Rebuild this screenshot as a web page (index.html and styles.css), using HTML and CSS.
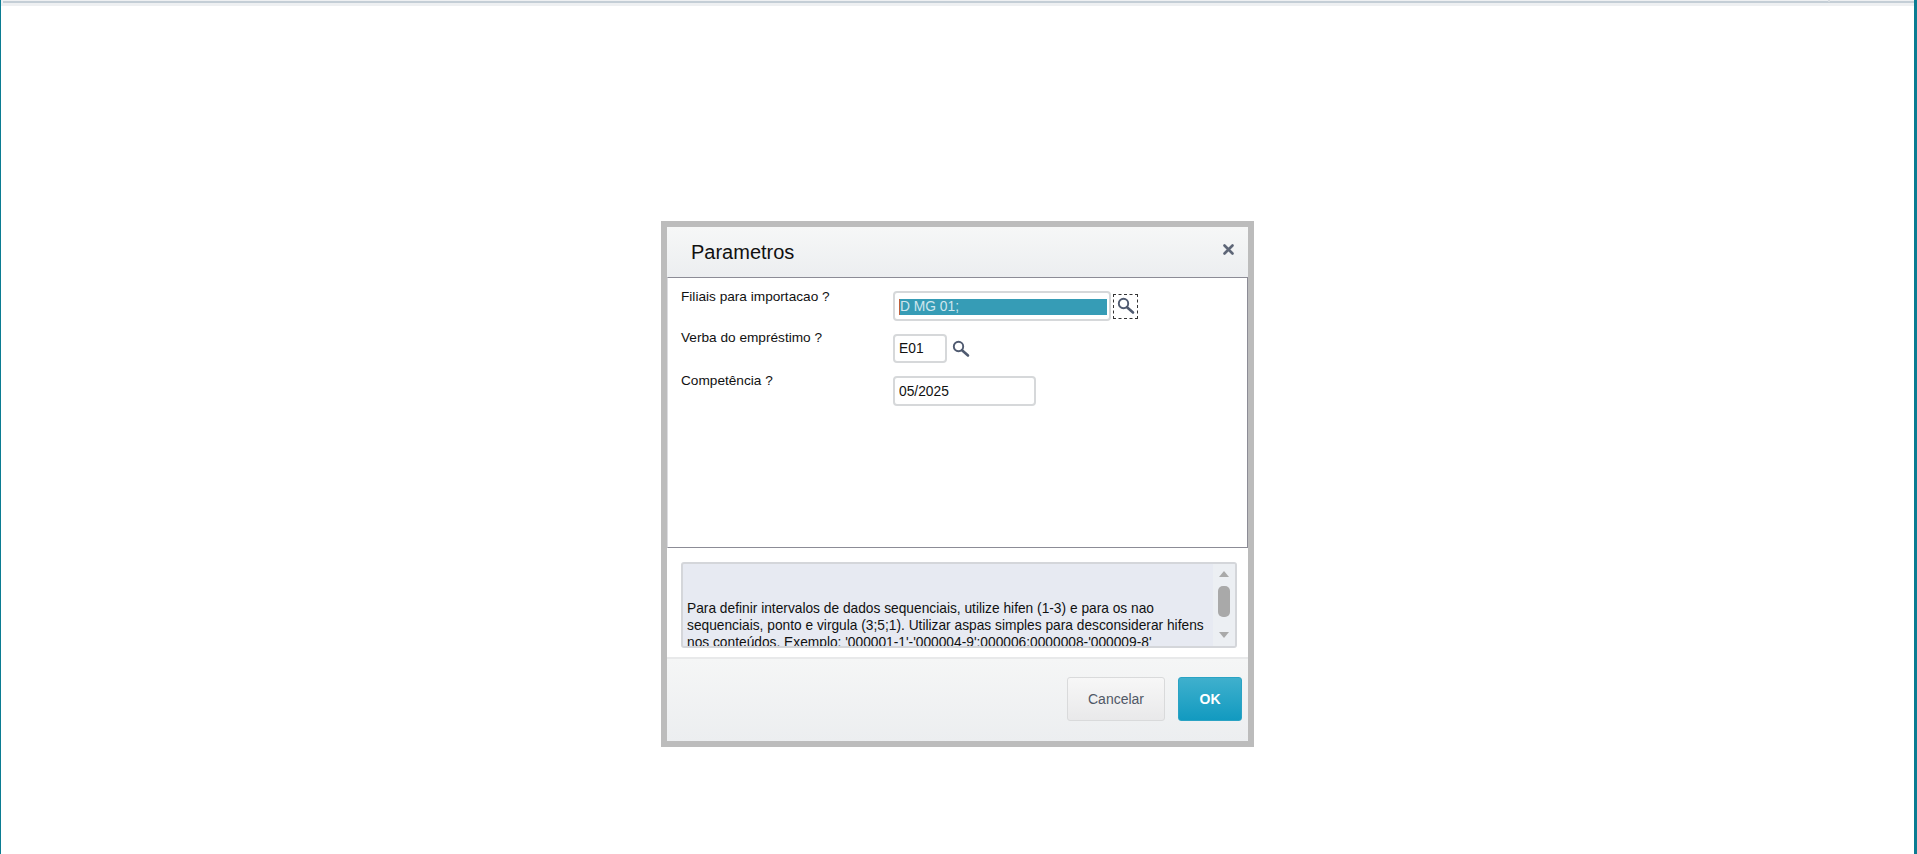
FILE: index.html

```html
<!DOCTYPE html>
<html lang="pt-BR">
<head>
  <meta charset="UTF-8" />
  <title>Parametros</title>
  <link rel="stylesheet" href="styles.css">
</head>
<body>
  <div class="topbar"><span class="topbar-line"></span><span class="topbar-tick"></span></div>

  <main class="page">
    <section class="dialog">
      <header class="dialog-head">
        <h1>Parametros</h1>
        <svg class="close" width="11" height="11" viewBox="0 0 11 11"><path d="M1.5 1.5l8 8M9.5 1.5l-8 8" stroke="#5e6677" stroke-width="2.6" stroke-linecap="round"/></svg>
      </header>

      <div class="dialog-body">
        <div class="row row-1">
          <label class="label">Filiais para importacao ?</label>
          <div class="field field-wide"><span class="selected">D MG 01;</span></div>
          <button class="lookup lookup-focus" type="button">
            <svg width="20" height="20" viewBox="0 0 20 20"><circle cx="7.5" cy="6.5" r="4.7" fill="none" stroke="#4f5a70" stroke-width="1.9"/><path d="M11 10.2l6 5.3" stroke="#4f5a70" stroke-width="2.6" stroke-linecap="round"/></svg>
          </button>
        </div>
        <div class="row row-2">
          <label class="label">Verba do empréstimo ?</label>
          <input class="field field-short" type="text" value="E01">
          <button class="lookup" type="button">
            <svg width="20" height="20" viewBox="0 0 20 20"><circle cx="7.5" cy="7.5" r="4.7" fill="none" stroke="#4f5a70" stroke-width="1.9"/><path d="M11 11.2l6 5.3" stroke="#4f5a70" stroke-width="2.6" stroke-linecap="round"/></svg>
          </button>
        </div>
        <div class="row row-3">
          <label class="label">Competência ?</label>
          <input class="field field-date" type="text" value="05/2025">
        </div>
      </div>

      <div class="help-wrap">
        <div class="help">
          <div class="help-text">
            <p>Para definir intervalos de dados sequenciais, utilize hifen (1-3) e para os nao sequenciais, ponto e virgula (3;5;1). Utilizar aspas simples para desconsiderar hifens nos conteúdos. Exemplo: '000001-1'-'000004-9':000006:0000008-'000009-8'</p>
          </div>
          <div class="scrollbar">
            <span class="arrow-up"></span>
            <span class="thumb"></span>
            <span class="arrow-down"></span>
          </div>
        </div>
      </div>

      <footer class="dialog-foot">
        <button class="btn btn-cancel" type="button">Cancelar</button>
        <button class="btn btn-ok" type="button">OK</button>
      </footer>
    </section>
  </main>
</body>
</html>
```

FILE: styles.css

```css
html, body {
  margin: 0;
  padding: 0;
  height: 100%;
  overflow: hidden;
}
body {
  font-family: "Liberation Sans", Arial, sans-serif;
  background: #fff;
  color: #111;
  border-left: 1px solid #0b7c92;
  border-right: 3px solid #0b7c92;
  box-sizing: border-box;
}
.topbar {
  height: 6px;
  background: #eef0f2;
  padding-top: 1px;
  box-sizing: border-box;
  position: relative;
}
.topbar-line {
  display: block;
  height: 2px;
  margin-left: 2px;
  background: #c4ced6;
}
.topbar-tick {
  position: absolute;
  top: 0;
  right: 84px;
  width: 2px;
  height: 2px;
  background: #d8dde1;
}
.page {
  display: flex;
  justify-content: center;
  padding-top: 215px;
}
.dialog {
  width: 581px;
  height: 514px;
  border: 6px solid #bcbcbc;
  display: flex;
  flex-direction: column;
  background: #fff;
}
.dialog-head {
  height: 50px;
  flex: none;
  display: flex;
  align-items: center;
  justify-content: space-between;
  padding: 0 14px 6px 25px;
  box-sizing: border-box;
  background: linear-gradient(#f6f7f7, #eceef0);
}
.dialog-head h1 {
  margin: 0;
  font-size: 20px;
  font-weight: normal;
  color: #111;
  position: relative;
  top: 3px;
  left: -1px;
}
.dialog-body {
  height: 271px;
  flex: none;
  box-sizing: border-box;
  border: 1px solid #8c8c96;
  border-left-color: #dcdce0;
  padding: 13px 0 0 13px;
}
.row {
  display: flex;
  align-items: flex-start;
  margin-bottom: 13px;
}
.label {
  width: 212px;
  flex: none;
  font-size: 13.65px;
  line-height: 16px;
  margin-top: -2px;
  color: #111;
}
.row-2 .label {
  margin-top: -4px;
}
.row-3 .label {
  margin-top: -3px;
}
.field {
  box-sizing: border-box;
  height: 30px;
  border: 2px solid #d6d8da;
  border-radius: 4px;
  background: #fff;
  font-family: inherit;
  font-size: 13.8px;
  color: #111;
  padding: 0 4px;
  margin: 0;
  outline: none;
}
.field-wide {
  width: 218px;
  padding: 6px 0 0 4px;
}
.field-short {
  width: 54px;
  height: 29px;
}
.field-date {
  width: 143px;
}
.selected {
  display: block;
  width: 208px;
  height: 16px;
  line-height: 16px;
  background: #369cb6;
  color: #cfe6ed;
  border-left: 1px solid #c0603c;
  box-sizing: border-box;
}
.lookup {
  width: 25px;
  height: 25px;
  padding: 0;
  margin: 3px 0 0 2px;
  background: none;
  border: 1px solid transparent;
  box-sizing: border-box;
  display: flex;
  align-items: center;
  justify-content: center;
}
.lookup-focus {
  border: 1px dashed #333;
}
.row-2 .lookup {
  margin: 2px 0 0 1px;
}
.help-wrap {
  height: 109px;
  flex: none;
  padding: 14px 11px 0 14px;
  box-sizing: border-box;
}
.help {
  height: 86px;
  box-sizing: border-box;
  border: 2px solid #d4d6da;
  border-radius: 3px;
  display: flex;
  overflow: hidden;
  background: #e7eaf2;
}
.help-text {
  flex: 1;
  padding: 36px 0 0 4px;
  font-size: 13.75px;
  line-height: 17px;
  color: #111;
  overflow: hidden;
}
.help-text p {
  margin: 0;
}
.scrollbar {
  width: 22px;
  flex: none;
  background: #eceff3;
  display: flex;
  flex-direction: column;
  align-items: center;
  padding-top: 7px;
  box-sizing: border-box;
}
.arrow-up, .arrow-down {
  width: 0;
  height: 0;
  border-left: 5px solid transparent;
  border-right: 5px solid transparent;
}
.arrow-up {
  border-bottom: 6px solid #a9a9a9;
}
.arrow-down {
  border-top: 6px solid #a9a9a9;
}
.thumb {
  width: 12px;
  height: 31px;
  border-radius: 5px;
  background: #a9a9a9;
  margin: 9px 0 15px;
}
.dialog-foot {
  flex: 1;
  border-top: 2px solid #e8e9ea;
  background: linear-gradient(#f5f6f6, #eceef0);
  display: flex;
  justify-content: flex-end;
  align-items: flex-start;
  gap: 13px;
  padding: 18px 6px 0 0;
}
.btn {
  height: 44px;
  border-radius: 3px;
  font-family: inherit;
  font-size: 14px;
  cursor: pointer;
  box-sizing: border-box;
}
.btn-cancel {
  width: 98px;
  background: linear-gradient(#f7f7f7, #e9e9ea);
  border: 1px solid #d9dadb;
  color: #505866;
}
.btn-ok {
  width: 64px;
  background: linear-gradient(#3fb0cd, #129ac0);
  border: 1px solid #2aa3c4;
  color: #fff;
  font-weight: bold;
}
```
